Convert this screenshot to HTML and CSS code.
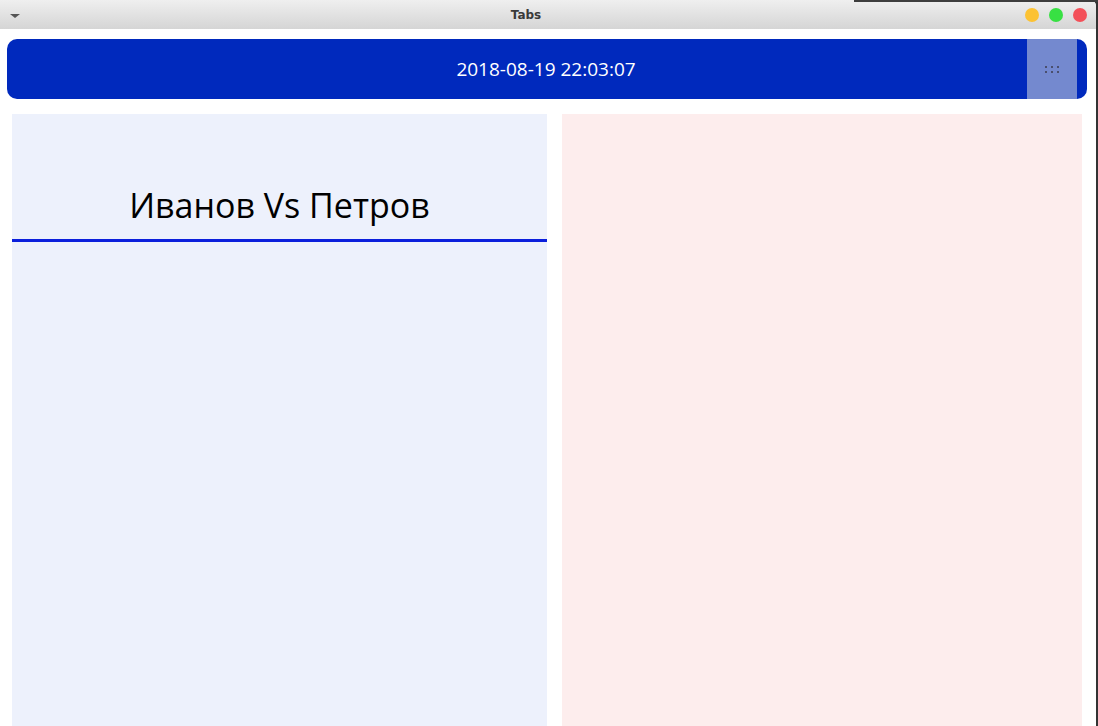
FILE: index.html
```html
<!DOCTYPE html>
<html lang="ru">
<head>
<meta charset="utf-8">
<title>Tabs</title>
<link rel="stylesheet" href="styles.css">
</head>
<body>
<div class="desktop-top"></div>
<div class="screen">
  <div class="window">
    <div class="titlebar">
      <div class="tb-menu"><span class="tb-arrow"></span></div>
      <div class="tb-title">Tabs</div>
      <div class="tb-buttons">
        <span class="dot dot-min"></span>
        <span class="dot dot-max"></span>
        <span class="dot dot-close"></span>
      </div>
    </div>
    <div class="content">
      <div class="header">
        <div class="header-time">2018-08-19 22:03:07</div>
        <div class="header-handle">
          <svg width="14" height="7" viewBox="0 0 14 7">
            <rect x="0" y="0" width="2" height="2" fill="#4a4f6e"/>
            <rect x="6" y="0" width="2" height="2" fill="#4a4f6e"/>
            <rect x="12" y="0" width="2" height="2" fill="#4a4f6e"/>
            <rect x="0" y="5" width="2" height="2" fill="#4a4f6e"/>
            <rect x="6" y="5" width="2" height="2" fill="#4a4f6e"/>
            <rect x="12" y="5" width="2" height="2" fill="#4a4f6e"/>
          </svg>
        </div>
        <div class="header-end"></div>
      </div>
      <div class="panels">
        <div class="panel panel-left">
          <div class="match-title">Иванов Vs Петров</div>
        </div>
        <div class="panel panel-right"></div>
      </div>
    </div>
  </div>
  <div class="desktop-right"></div>
</div>
</body>
</html>
```
FILE: styles.css
```css
html, body {
  margin: 0;
  padding: 0;
  width: 1098px;
  height: 726px;
  overflow: hidden;
  background: #3b3b3b;
  font-family: "Open Sans", "Noto Sans", sans-serif;
}

.desktop-top {
  position: absolute;
  left: 854px;
  top: 0;
  width: 244px;
  height: 2px;
  background: #3d3d3d;
  z-index: 2;
}

.screen {
  display: flex;
  width: 1098px;
  height: 726px;
}

.window {
  position: relative;
  z-index: 1;
  width: 1096px;
  height: 726px;
  background: #ffffff;
  display: flex;
  flex-direction: column;
  border-top-right-radius: 6px;
  overflow: hidden;
}

.desktop-right {
  width: 2px;
  height: 726px;
  background: #333333;
}

.titlebar {
  height: 29px;
  flex: none;
  background: linear-gradient(#efefef, #d5d5d5);
  display: flex;
  align-items: center;
  position: relative;
}

.tb-menu {
  width: 29px;
  height: 29px;
  display: flex;
  align-items: center;
  justify-content: center;
}

.tb-arrow {
  width: 0;
  height: 0;
  border-left: 5px solid transparent;
  border-right: 5px solid transparent;
  border-top: 4px solid #555555;
  margin-top: 3px;
  margin-left: 1px;
}

.tb-title {
  flex: 1;
  text-align: center;
  font-family: "DejaVu Sans", "Liberation Sans", sans-serif;
  font-weight: bold;
  font-size: 12px;
  color: #3a3a3a;
  padding-right: 2px;
}

.tb-buttons {
  display: flex;
  gap: 10px;
  padding-right: 9px;
  align-items: center;
}

.dot {
  width: 14px;
  height: 14px;
  border-radius: 50%;
  display: block;
}

.dot-min { background: #fcc233; }
.dot-max { background: #38e043; }
.dot-close { background: #f35059; }

.content {
  flex: 1;
  display: flex;
  flex-direction: column;
  padding-top: 10px;
}

.header {
  margin-left: 7px;
  width: 1080px;
  height: 60px;
  background: #0029bd;
  border-radius: 10px;
  display: flex;
  overflow: hidden;
}

.header-time {
  flex: 1;
  display: flex;
  align-items: center;
  justify-content: center;
  color: #ffffff;
  font-size: 19px;
  padding-left: 58px;
  padding-top: 0;
}

.header-handle {
  width: 50px;
  background: #7489cf;
  display: flex;
  align-items: center;
  justify-content: center;
}

.header-handle svg {
  display: block;
  margin-top: 1px;
}

.header-end {
  width: 10px;
}

.panels {
  flex: 1;
  display: flex;
  gap: 15px;
  margin-top: 15px;
  margin-left: 12px;
}

.panel {
  height: 100%;
}

.panel-left {
  width: 535px;
  background: #edf1fc;
}

.panel-right {
  width: 520px;
  background: #fdeded;
}

.match-title {
  padding-top: 69px;
  padding-bottom: 12px;
  height: 44px;
  line-height: 44px;
  font-size: 34px;
  color: #000000;
  text-align: center;
  border-bottom: 3px solid #0b1fdc;
}
```
